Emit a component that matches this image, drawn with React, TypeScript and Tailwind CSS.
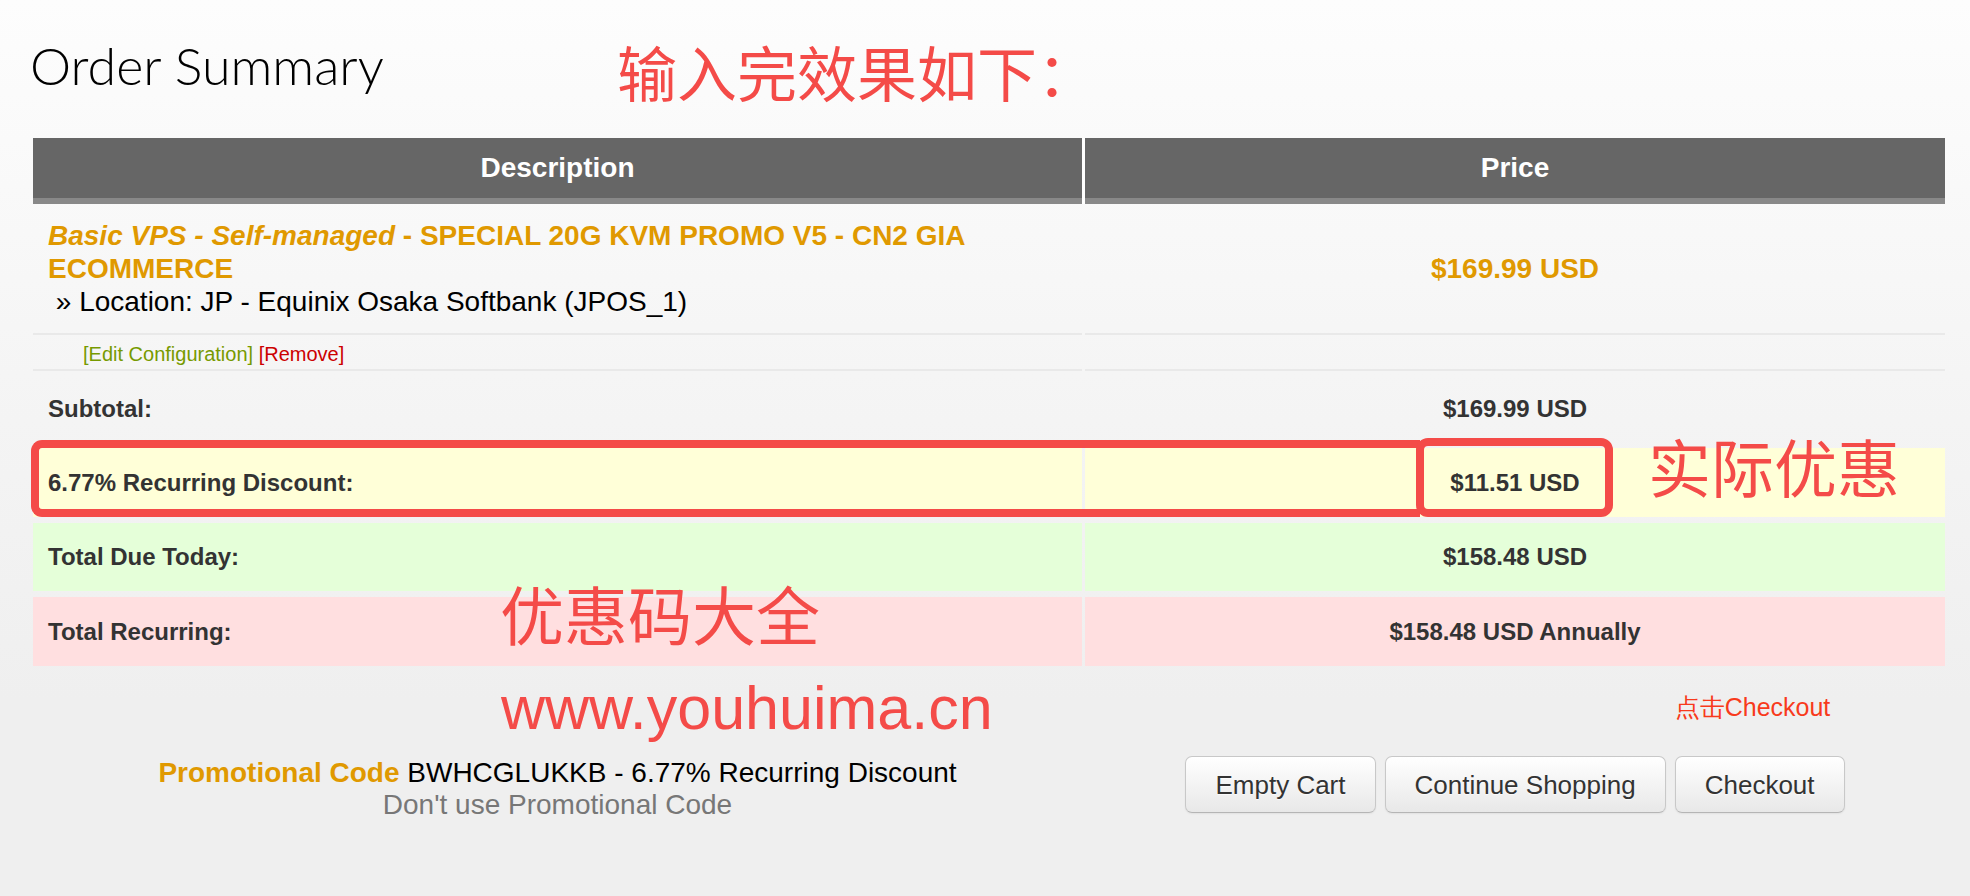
import React from 'react'

const SANS = "font-['Liberation_Sans',Arial,Helvetica,sans-serif]"
const CJK = "font-['Noto_Sans_CJK_SC','Noto_Sans',sans-serif]"

interface TotalRow {
  label: string
  value: string
  rowClass: string
  spacing: string
  height: string
}

const totals: TotalRow[] = [
  { label: 'Subtotal:', value: '$169.99 USD', rowClass: 'bg-transparent pt-[4px]', spacing: 'mt-0', height: 'h-[72px]' },
  { label: '6.77% Recurring Discount:', value: '$11.51 USD', rowClass: 'bg-[#ffffd8]', spacing: 'mt-[5px]', height: 'h-[69px]' },
  { label: 'Total Due Today:', value: '$158.48 USD', rowClass: 'bg-[#e5ffd9]', spacing: 'mt-[6px]', height: 'h-[68px]' },
  { label: 'Total Recurring:', value: '$158.48 USD Annually', rowClass: 'bg-[#ffdfe0]', spacing: 'mt-[6px]', height: 'h-[69px]' },
]

function CartButton({ children }: { children: React.ReactNode }) {
  return (
    <button
      type="button"
      className="h-[57px] rounded-[7px] border border-[#c8c8c8] border-b-[#b5b5b5] bg-[linear-gradient(to_bottom,#ffffff,#e8e8e8)] px-[29px] text-[26px] leading-none text-[#333] shadow-[0_1px_2px_rgba(0,0,0,0.06)] [text-shadow:0_1px_1px_rgba(255,255,255,0.75)]"
    >
      {children}
    </button>
  )
}

export default function App() {
  return (
    <div
      className={`relative min-h-[896px] w-[1970px] overflow-hidden bg-[linear-gradient(to_bottom,#fdfdfd_0px,#f4f4f4_420px,#efefef_700px,#efefef_896px)] ${SANS}`}
    >
      {/* page heading */}
      <div className="flex h-[138px] items-start">
        <h1 className="ml-[30px] mt-[39px] w-[587px] font-['Lato',sans-serif] text-[52px] font-light leading-none text-black">
          Order Summary
        </h1>
        <div className={`mt-[41px] text-[60px] leading-none text-[#f44b48] ${CJK}`}>输入完效果如下：</div>
      </div>

      {/* order table */}
      <div className="ml-[33px] w-[1912px]">
        <div className="flex gap-[3px] bg-white">
          <div className="flex h-[66px] w-[1049px] items-center justify-center border-b-[6px] border-[#888] bg-[#666] pb-[1px] text-[28px] font-bold text-white">
            Description
          </div>
          <div className="flex h-[66px] w-[860px] items-center justify-center border-b-[6px] border-[#888] bg-[#666] pb-[1px] text-[28px] font-bold text-white">
            Price
          </div>
        </div>

        <div className="flex gap-[3px]">
          <div className="w-[1049px] border-b-2 border-[#e9e9e9] px-[15px] py-[15px] text-[28px] leading-[33px]">
            <span className="font-bold text-[#e09900]">
              <em>Basic VPS - Self-managed</em> - SPECIAL 20G KVM PROMO V5 - CN2 GIA
              <br />
              ECOMMERCE
            </span>
            <br />
            <span className="text-black">&nbsp;» Location: JP - Equinix Osaka Softbank (JPOS_1)</span>
          </div>
          <div className="flex w-[860px] items-center justify-center border-b-2 border-[#e9e9e9] text-[28px] font-bold text-[#e09900]">
            $169.99 USD
          </div>
        </div>

        <div className="flex gap-[3px]">
          <div className="flex h-[36px] w-[1049px] items-center border-b-2 border-[#e9e9e9] pl-[50px] pt-[4px] text-[20px]">
            <a className="text-[#779a00]">[Edit Configuration]</a>
            <span>&nbsp;</span>
            <a className="text-[#cc0000]">[Remove]</a>
          </div>
          <div className="h-[36px] w-[860px] border-b-2 border-[#e9e9e9]" />
        </div>

        {totals.map((row) => (
          <div key={row.label} className={`flex gap-[3px] ${row.spacing}`}>
            <div className={`flex w-[1049px] items-center pl-[15px] text-[24px] font-bold text-[#333] ${row.height} ${row.rowClass}`}>
              {row.label}
            </div>
            <div className={`flex w-[860px] items-center justify-center text-[24px] font-bold text-[#333] ${row.height} ${row.rowClass}`}>
              {row.value}
            </div>
          </div>
        ))}

        {/* promo code + buttons */}
        <div className="flex gap-[3px] pt-[89px]">
          <div className="w-[1049px] pt-[2px] text-center text-[28px] leading-[32px]">
            <div>
              <span className="font-bold text-[#e09900]">Promotional Code</span>{' '}
              <span className="text-black">BWHCGLUKKB - 6.77% Recurring Discount</span>
            </div>
            <a className="text-[#777]">Don't use Promotional Code</a>
          </div>
          <div className="flex w-[860px] justify-center gap-[9px] pt-[1px]">
            <CartButton>Empty Cart</CartButton>
            <CartButton>Continue Shopping</CartButton>
            <span className="relative">
              <span className="absolute left-0 top-[-61px] whitespace-nowrap text-[25px] leading-[25px] text-[#f83a1c]">
                点击Checkout
              </span>
              <CartButton>Checkout</CartButton>
            </span>
          </div>
        </div>
      </div>

      {/* red annotations drawn over the screenshot */}
      <div className="absolute left-[31px] top-[440px] h-[77px] w-[1389px] rounded-l-[11px] border-[8px] border-r-0 border-[#f44b48]" />
      <div className="absolute left-[1416px] top-[438px] h-[79px] w-[197px] rounded-[12px] border-[8px] border-[#f44b48]" />
      <div className={`absolute left-[1648px] top-[433px] text-[63px] leading-none text-[#f44b48] ${CJK}`}>实际优惠</div>
      <div className={`absolute left-[500px] top-[580px] text-[64px] leading-none text-[#f44b48] ${CJK}`}>优惠码大全</div>
      <div className="absolute left-[501px] top-[678px] text-[61px] leading-none text-[#f44b48]">www.youhuima.cn</div>
    </div>
  )
}
